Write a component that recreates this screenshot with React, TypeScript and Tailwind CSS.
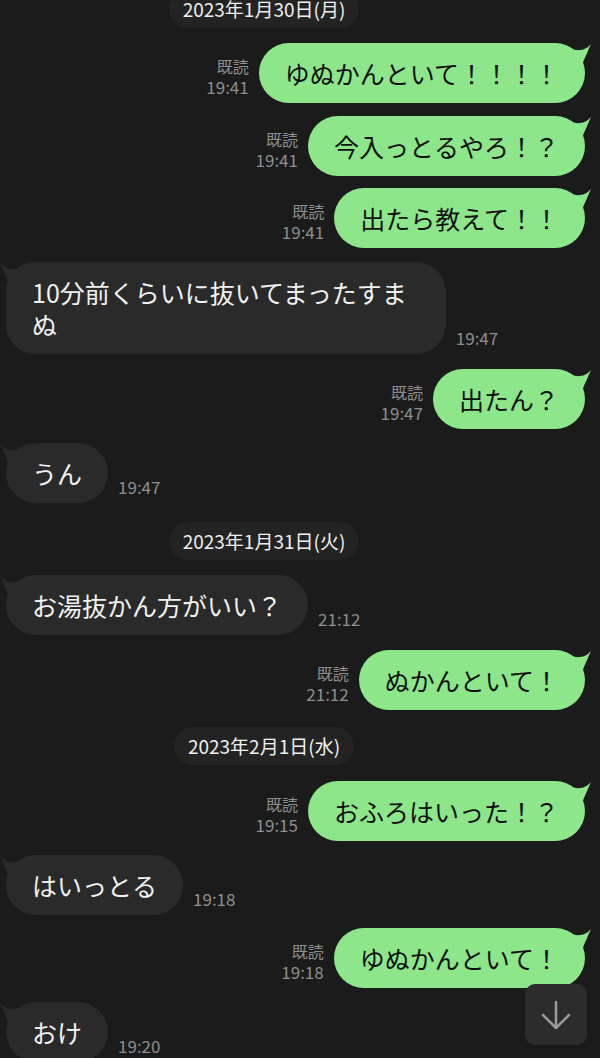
import { FC } from "react";

const GreenTail = () => (
  <svg className="absolute right-[-8px] top-0" width="24" height="24" viewBox="0 0 24 24">
    <path d="M2 6 C9 8 16 8 22 1 C19 8 16 14 13 22 L2 22 Z" fill="#8de68a" />
  </svg>
);

const DarkTail = () => (
  <svg className="absolute left-[-8px] top-0" width="24" height="24" viewBox="0 0 24 24">
    <path d="M22 6 C15 8 8 8 2 1 C5 8 8 14 11 22 L22 22 Z" fill="#2a2a2a" />
  </svg>
);

interface RowProps {
  text: string;
  time: string;
  mt: string;
  pad?: string;
}

const Sent: FC<RowProps> = ({ text, time, mt }) => (
  <div className={`flex justify-end items-end pr-[15px] ${mt}`}>
    <div className="mr-[10px] mb-[6px] text-right text-[#8e8e8e]">
      <div className="text-[16px] leading-[20px]">既読</div>
      <div className="text-[17px] leading-[21px]">{time}</div>
    </div>
    <div className="relative rounded-[30px] bg-[#8de68a] px-[26px] py-[14px] text-[25px] leading-[32px] text-[#111111] whitespace-pre">
      <GreenTail />
      <span className="relative">{text}</span>
    </div>
  </div>
);

const Recv: FC<RowProps> = ({ text, time, mt, pad = "pr-[26px]" }) => (
  <div className={`flex items-end pl-[6px] ${mt}`}>
    <div className={`relative rounded-[30px] bg-[#2a2a2a] pl-[26px] ${pad} py-[14px] text-[25px] leading-[32px] text-[#f2f2f2] whitespace-pre`}>
      <DarkTail />
      <span className="relative">{text}</span>
    </div>
    <div className="ml-[10px] mb-[6px] text-[17px] leading-[21px] text-[#8e8e8e]">{time}</div>
  </div>
);

const DatePill: FC<{ text: string; mt: string }> = ({ text, mt }) => (
  <div className={`flex w-[528px] justify-center ${mt}`}>
    <div className="h-[38px] rounded-full bg-[#232323] px-[14px] text-[19px] leading-[38px] text-[#f0f0f0]">
      {text}
    </div>
  </div>
);

export default function App() {
  return (
    <div className="relative h-[1058px] w-[600px] overflow-hidden bg-[#1b1b1b] font-['Noto_Sans_CJK_JP','Noto_Sans',sans-serif]">
      <div className="flex flex-col mt-[-10px]">
        <DatePill text="2023年1月30日(月)" mt="mt-0" />
        <Sent text="ゆぬかんといて！！！！" time="19:41" mt="mt-[15px]" />
        <Sent text="今入っとるやろ！？" time="19:41" mt="mt-[13px]" />
        <Sent text="出たら教えて！！" time="19:41" mt="mt-[12px]" />
        <Recv text={"10分前くらいに抜いてまったすま\nぬ"} time="19:47" mt="mt-[14px]" pad="pr-[39px]" />
        <Sent text="出たん？" time="19:47" mt="mt-[15px]" />
        <Recv text="うん" time="19:47" mt="mt-[14px]" />
        <DatePill text="2023年1月31日(火)" mt="mt-[19px]" />
        <Recv text="お湯抜かん方がいい？" time="21:12" mt="mt-[15px]" />
        <Sent text="ぬかんといて！" time="21:12" mt="mt-[15px]" />
        <DatePill text="2023年2月1日(水)" mt="mt-[17px]" />
        <Sent text="おふろはいった！？" time="19:15" mt="mt-[16px]" />
        <Recv text="はいっとる" time="19:18" mt="mt-[14px]" />
        <Sent text="ゆぬかんといて！" time="19:18" mt="mt-[13px]" />
        <Recv text="おけ" time="19:20" mt="mt-[14px]" />
      </div>
      <button className="absolute left-[525px] top-[984px] flex h-[61px] w-[62px] items-center justify-center rounded-[10px] bg-[#2c2c2c]">
        <svg width="30" height="30" viewBox="0 0 30 30" fill="none" stroke="#9a9a9a" strokeWidth="2.5" strokeLinecap="round" strokeLinejoin="round">
          <path d="M15 2 V28 M2 15 L15 28 L28 15" />
        </svg>
      </button>
    </div>
  );
}
